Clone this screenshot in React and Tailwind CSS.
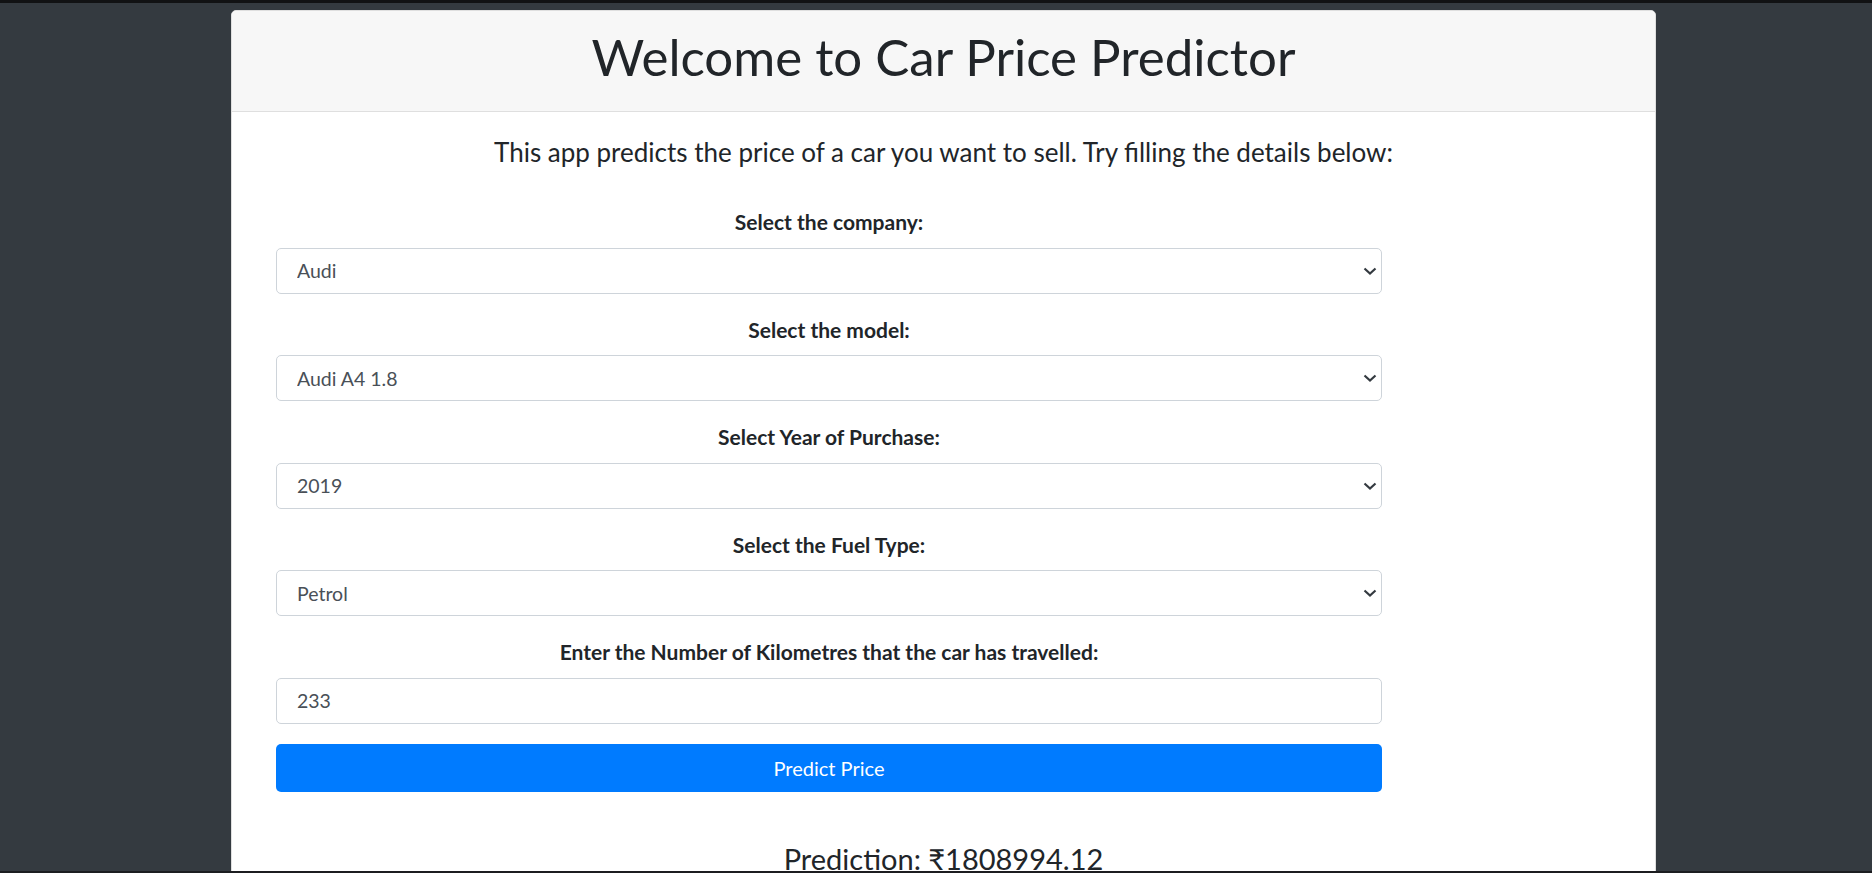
import React, { useState } from 'react';

const companies = ['Audi', 'BMW', 'Honda', 'Hyundai', 'Maruti', 'Toyota'];
const models = ['Audi A4 1.8', 'Audi A6 2.0', 'Audi Q7'];
const years = ['2019', '2018', '2017', '2016', '2015'];
const fuels = ['Petrol', 'Diesel', 'LPG'];

const Chevron = () => (
  <svg
    className="pointer-events-none absolute right-[5px] top-1/2 -translate-y-1/2"
    width="14"
    height="8"
    viewBox="0 0 14 8"
    fill="none"
  >
    <polyline points="1.5,1.5 7,6.5 12.5,1.5" stroke="#343a40" strokeWidth="2.2" />
  </svg>
);

const SelectField = ({ label, value, options, onChange }) => (
  <div className="mb-[20px]">
    <label className="mb-[9px] block text-center text-[21px] font-bold leading-[32.5px] text-[#212529]">
      {label}
    </label>
    <div className="relative">
      <select
        value={value}
        onChange={(e) => onChange(e.target.value)}
        className="block h-[46px] w-full appearance-none rounded-[5px] border border-[#ced4da] bg-white pl-[20px] text-[19.5px] text-[#495057] outline-none"
      >
        {options.map((o) => (
          <option key={o}>{o}</option>
        ))}
      </select>
      <Chevron />
    </div>
  </div>
);

const App = () => {
  const [company, setCompany] = useState('Audi');
  const [model, setModel] = useState('Audi A4 1.8');
  const [year, setYear] = useState('2019');
  const [fuel, setFuel] = useState('Petrol');
  const [kms, setKms] = useState('233');

  const onSubmitHandler = (e) => {
    e.preventDefault();
  };

  return (
    <div
      className="flex h-screen flex-col overflow-hidden bg-[#343a40]"
      style={{ fontFamily: 'Lato, "Noto Sans", sans-serif' }}
    >
      <div className="h-[3px] flex-none bg-[#111214]" />
      <div className="min-h-0 flex-1 overflow-hidden pt-[7px]">
        <div className="ml-[231px] w-[1425px] rounded-[5px] border border-[#dfdfdf] bg-white">
          <div className="rounded-t-[5px] border-b border-[#dfdfdf] bg-[#f7f7f7] pt-[15px] pb-[24px]">
            <h1 className="text-center text-[51px] leading-[1.2] text-[#212529]">
              Welcome to Car Price Predictor
            </h1>
          </div>
          <div className="pt-[25px]">
            <h5 className="text-center text-[26px] leading-[1.2] text-[#212529]">
              This app predicts the price of a car you want to sell. Try filling the details below:
            </h5>
            <form onSubmit={onSubmitHandler} className="ml-[44px] mt-[38px] w-[1106px]">
              <SelectField label="Select the company:" value={company} options={companies} onChange={setCompany} />
              <SelectField label="Select the model:" value={model} options={models} onChange={setModel} />
              <SelectField label="Select Year of Purchase:" value={year} options={years} onChange={setYear} />
              <SelectField label="Select the Fuel Type:" value={fuel} options={fuels} onChange={setFuel} />
              <div className="mb-[20px]">
                <label className="mb-[9px] block text-center text-[21px] font-bold leading-[32.5px] text-[#212529]">
                  Enter the Number of Kilometres that the car has travelled:
                </label>
                <input
                  type="text"
                  value={kms}
                  onChange={(e) => setKms(e.target.value)}
                  className="block h-[46px] w-full rounded-[5px] border border-[#ced4da] bg-white pl-[20px] text-[19.5px] text-[#495057] outline-none"
                />
              </div>
              <button
                type="submit"
                className="block h-[48px] w-full rounded-[5px] bg-[#007bff] text-[20px] text-white"
              >
                Predict Price
              </button>
            </form>
            <h4 className="mt-[50px] text-center text-[29px] leading-[1.2] text-[#212529]">
              Prediction: ₹1808994.12
            </h4>
          </div>
        </div>
      </div>
      <div className="h-[2px] flex-none bg-[#1c1d20]" />
    </div>
  );
};

export default App;
